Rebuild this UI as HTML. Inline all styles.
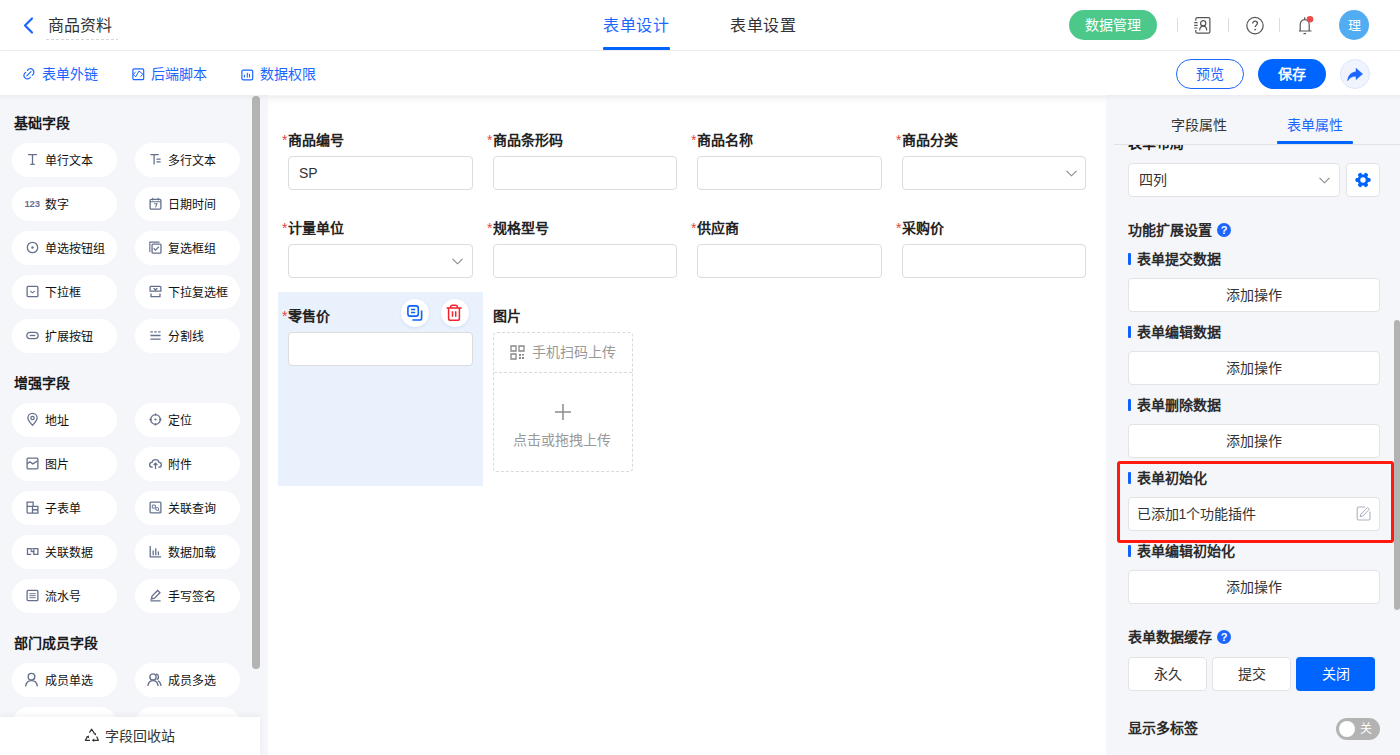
<!DOCTYPE html>
<html lang="zh-CN">
<head>
<meta charset="utf-8">
<style>
*{box-sizing:border-box;margin:0;padding:0}
html,body{width:1400px;height:755px;overflow:hidden;background:#fff}
body{position:relative;font-family:"Liberation Sans",sans-serif;font-size:14px;color:#333}
.a{position:absolute}
.in{position:absolute;left:0;top:1px;width:100%;height:100%}
.t{position:absolute;white-space:nowrap;line-height:20px}
svg{position:absolute;overflow:visible}
/* header */
#hdr{position:absolute;left:0;top:0;width:1400px;height:51px;border-bottom:1px solid #efefef;background:#fff}
#tb{position:absolute;left:0;top:51px;width:1400px;height:44px;background:#fff;box-shadow:0 2px 5px rgba(0,0,0,0.05);z-index:3}
.blue{color:#1b66ff}
/* left panel */
#lp{position:absolute;left:0;top:95px;width:268px;height:660px;background:#f5f6fa;overflow:hidden}
.h{position:absolute;white-space:nowrap;line-height:18px;font-weight:bold;color:#1a1a1a;font-size:14px}
.pill{position:absolute;width:105px;height:34px;border-radius:17px;background:#fff}
.pill .lb{position:absolute;left:33px;top:7.7px;line-height:20px;font-size:12px;color:#111;white-space:nowrap}
.pill svg{left:13.5px;top:10px}
/* canvas */
#cv{position:absolute;left:268px;top:95px;width:838px;height:660px;background:#fff;overflow:hidden}
.lab{position:absolute;white-space:nowrap;line-height:20px;font-weight:bold;color:#222;font-size:14px}
.lab i{font-style:normal;color:#f04134;font-weight:normal;margin-right:1px}
.inp{position:absolute;width:185px;height:34px;border:1px solid #dcdcdc;border-radius:4px;background:#fff}
/* right panel */
#rp{position:absolute;left:1106px;top:95px;width:294px;height:660px;background:#f5f6fa;overflow:hidden}
.btn{position:absolute;left:22px;width:252px;height:34px;border:1px solid #e3e3e6;border-radius:4px;background:#fff;text-align:center;line-height:33px;color:#333}
.sec{position:absolute;left:22px;white-space:nowrap;line-height:20px;font-weight:bold;color:#2b2b2b;padding-left:9px}
.sec:before{content:"";position:absolute;left:0;top:4px;width:3px;height:12px;background:#0f62fe;border-radius:1px}
</style>
</head>
<body>
<!-- HEADER -->
<div id="hdr">
  <svg style="left:22px;top:17px" width="12" height="17" viewBox="0 0 12 17"><path d="M10 1.5 L3 8.5 L10 15.5" fill="none" stroke="#1b66ff" stroke-width="2.2" stroke-linecap="round" stroke-linejoin="round"/></svg>
  <div class="t" style="left:48px;top:16px;font-size:16px;color:#333">商品资料</div>
  <div class="a" style="left:46px;top:39px;width:72px;height:1px;background:repeating-linear-gradient(90deg,#d6d6d6 0 3px,transparent 3px 5px)"></div>
  <div class="t" style="left:603px;top:16px;font-size:16px;color:#1b66ff;letter-spacing:0.6px">表单设计</div>
  <div class="a" style="left:603px;top:47px;width:67px;height:3px;background:#0064ff;border-radius:1px"></div>
  <div class="t" style="left:730px;top:16px;font-size:16px;color:#333;letter-spacing:0.5px">表单设置</div>

  <div class="a" style="left:1069px;top:10px;width:88px;height:30px;border-radius:15px;background:#4cc98a;color:#fff;text-align:center;line-height:30px;font-size:14px">数据管理</div>
  <div class="a" style="left:1177px;top:18px;width:1px;height:14px;background:#dcdcdc"></div>
  <div class="a" style="left:1228px;top:18px;width:1px;height:14px;background:#dcdcdc"></div>
  <div class="a" style="left:1279px;top:18px;width:1px;height:14px;background:#dcdcdc"></div>
  <!-- contact icon -->
  <svg style="left:1194px;top:17px" width="17" height="17" viewBox="0 0 17 17"><g fill="none" stroke="#555" stroke-width="1.2"><path d="M1.8 3.8V2q0-1.4 1.4-1.4h11.3q1.4 0 1.4 1.4v12.7q0 1.4-1.4 1.4H3.2q-1.4 0-1.4-1.4v-1.8"/><path d="M0.2 5.6h3.4M0.2 8.3h3.4M0.2 11h3.4"/><circle cx="9.2" cy="6.2" r="2.6"/><path d="M5.6 13.4C5.8 10.6 7.3 9.1 9.2 9.1s3.4 1.5 3.6 4.3"/></g></svg>
  <!-- help icon -->
  <svg style="left:1246px;top:17px" width="18" height="18" viewBox="0 0 18 18">
    <circle cx="9" cy="8.6" r="8.2" fill="none" stroke="#555" stroke-width="1.2"/>
    <path d="M6.6 6.6c0-1.4 1.1-2.4 2.4-2.4s2.4 0.9 2.4 2.2c0 1.6-2.3 1.9-2.3 3.6" fill="none" stroke="#555" stroke-width="1.3"/>
    <circle cx="9.1" cy="12.6" r="0.85" fill="#555"/>
  </svg>
  <!-- bell -->
  <svg style="left:1297px;top:16px" width="18" height="19" viewBox="0 0 18 19">
    <path d="M2 15h12.5M3.2 15V8.5c0-2.6 1.8-4.8 4.5-4.8s4.5 2.2 4.5 4.8V15" fill="none" stroke="#555" stroke-width="1.2"/>
    <path d="M6.5 17.6h2.5" stroke="#555" stroke-width="1.2"/>
    <path d="M7.7 1.2v2" stroke="#555" stroke-width="1.2"/>
    <circle cx="13" cy="3.2" r="3.3" fill="#ec4b4b"/>
  </svg>
  <div class="a" style="left:1339px;top:10px;width:30px;height:30px;border-radius:50%;background:#52acf2;color:#fff;text-align:center;line-height:32px;font-size:13px">理</div>
</div>

<!-- TOOLBAR -->
<div id="tb">
  <svg style="left:22px;top:15.7px" width="14" height="14" viewBox="0 0 14 14"><path d="M5.4 3.4A3.5 3.5 0 1 1 10.2 8.2M3.6 5.4A3.5 3.5 0 1 0 8.4 10.2M4.8 8.8L9 4.6" fill="none" stroke="#1b66ff" stroke-width="1.2" stroke-linecap="round"/></svg>
  <div class="t blue" style="left:42px;top:13px">表单外链</div>
  <svg style="left:132px;top:16.5px" width="13" height="13" viewBox="0 0 13 13"><rect x="0.9" y="0.9" width="10.8" height="10.8" rx="1.3" fill="none" stroke="#1b66ff" stroke-width="1.2"/><path d="M3.6 4.2L1.2 6.3l2.6 2.4L7 3l4 3.3-2.6 2.3" fill="none" stroke="#1b66ff" stroke-width="1" stroke-linejoin="round"/></svg>
  <div class="t blue" style="left:151px;top:13px">后端脚本</div>
  <svg style="left:241px;top:16.5px" width="13" height="13" viewBox="0 0 13 13"><rect x="0.9" y="2.2" width="10.8" height="9.6" rx="1.4" fill="none" stroke="#1b66ff" stroke-width="1.2"/><path d="M3.4 6.8v2.6M6.3 4.8v4.6M8.5 6v3.4" fill="none" stroke="#1b66ff" stroke-width="1.1"/></svg>
  <div class="t blue" style="left:260px;top:13px">数据权限</div>

  <div class="a" style="left:1176px;top:8px;width:68px;height:30px;border:1px solid #1b66ff;border-radius:15px;color:#1b66ff;text-align:center;line-height:28px">预览</div>
  <div class="a" style="left:1258px;top:8px;width:68px;height:30px;border-radius:15px;background:#0064ff;color:#fff;text-align:center;line-height:30px;-webkit-text-stroke:0.45px #fff">保存</div>
  <div class="a" style="left:1340px;top:8px;width:30px;height:30px;border-radius:50%;background:#eff4ff;border:1px solid #dde6fa"></div>
  <svg style="left:1347px;top:16.5px" width="16" height="13" viewBox="0 0 16 13"><path d="M9 0.3L15.6 6 9 11.6V8.3C5.6 8.2 3 9.3 0.6 12.8 1 7.6 3.8 4.4 9 3.8z" fill="#1b66ff" stroke="#1b66ff" stroke-width="0.5" stroke-linejoin="round"/></svg>
</div>

<!-- LEFT PANEL -->
<div id="lp"><div class="in">
  <div class="h" style="left:14px;top:18px">基础字段</div>
  <div class="h" style="left:14px;top:278px">增强字段</div>
  <div class="h" style="left:14px;top:538px">部门成员字段</div>
  <!--PILLS-->
  <div class="pill" style="left:12px;top:47px"><svg width="13" height="13" viewBox="0 0 14 14" fill="none" stroke="#65708c" stroke-width="1.4"><path d="M2.2 1.8h9.6M7 1.8v10.4M4.6 12.2h4.8"/></svg><span class="lb">单行文本</span></div>
  <div class="pill" style="left:135px;top:47px"><svg width="13" height="13" viewBox="0 0 14 14" fill="none" stroke="#65708c" stroke-width="1.4"><path d="M1.5 1.8h9M5.5 1.8v10.6M8 6.6h4.5M8 9.6h4.5"/></svg><span class="lb">多行文本</span></div>
  <div class="pill" style="left:12px;top:91px"><span style="position:absolute;left:12.5px;top:10px;line-height:14px;font-family:Liberation Sans;font-weight:bold;font-size:9.5px;color:#65708c;letter-spacing:-0.2px">123</span><span class="lb">数字</span></div>
  <div class="pill" style="left:135px;top:91px"><svg width="13" height="13" viewBox="0 0 14 14" fill="none" stroke="#65708c" stroke-width="1.4"><rect x="1.2" y="2.6" width="11.6" height="10.4" rx="1.2"/><path d="M4 0.8v3M10 0.8v3M1.2 5h11.6M5.6 7.2h3l-1.6 4" stroke-width="1.1"/></svg><span class="lb">日期时间</span></div>
  <div class="pill" style="left:12px;top:135px"><svg width="13" height="13" viewBox="0 0 14 14" fill="none" stroke="#65708c" stroke-width="1.4"><circle cx="7" cy="7" r="5.6"/><circle cx="7" cy="7" r="1.3" fill="#65708c" stroke="none"/></svg><span class="lb">单选按钮组</span></div>
  <div class="pill" style="left:135px;top:135px"><svg width="13" height="13" viewBox="0 0 14 14" fill="none" stroke="#65708c" stroke-width="1.4"><path d="M0.9 11.8V1.2h10.4" stroke-width="1.2"/><rect x="3.3" y="3.4" width="9.6" height="9.6" rx="1"/><path d="M5 7.8l2 2 3.6-3.6" stroke-width="1.2"/></svg><span class="lb">复选框组</span></div>
  <div class="pill" style="left:12px;top:179px"><svg width="13" height="13" viewBox="0 0 14 14" fill="none" stroke="#65708c" stroke-width="1.4"><rect x="1.2" y="1.5" width="11.6" height="11" rx="1"/><path d="M4.6 6.2L7 8.4l2.4-2.2" stroke-width="1.1"/></svg><span class="lb">下拉框</span></div>
  <div class="pill" style="left:135px;top:179px"><svg width="13" height="13" viewBox="0 0 14 14" fill="none" stroke="#65708c" stroke-width="1.4"><path d="M1.2 6.5V2.4q0-1 1-1h9.6q1 0 1 1v4.1zM5 3.4l2 1.8 2-1.8M2.2 9.2v3.3h9.6V9.2"/></svg><span class="lb">下拉复选框</span></div>
  <div class="pill" style="left:12px;top:223px"><svg width="13" height="13" viewBox="0 0 14 14" fill="none" stroke="#65708c" stroke-width="1.4"><rect x="0.9" y="3.6" width="12.2" height="6.8" rx="3.4"/><path d="M4 7h6"/></svg><span class="lb">扩展按钮</span></div>
  <div class="pill" style="left:135px;top:223px"><svg width="13" height="13" viewBox="0 0 14 14" fill="none" stroke="#65708c" stroke-width="1.4"><path d="M1.5 3h2.6M5.7 3h2.6M9.9 3h2.6M1.5 7h11M1.5 11h11"/></svg><span class="lb">分割线</span></div>
  <div class="pill" style="left:12px;top:307px"><svg width="13" height="13" viewBox="0 0 14 14" fill="none" stroke="#65708c" stroke-width="1.4"><path d="M7 13.2C3.8 10 2 7.6 2 5.4a5 5 0 0 1 10 0c0 2.2-1.8 4.6-5 7.8z"/><circle cx="7" cy="5.4" r="1.8"/></svg><span class="lb">地址</span></div>
  <div class="pill" style="left:135px;top:307px"><svg width="13" height="13" viewBox="0 0 14 14" fill="none" stroke="#65708c" stroke-width="1.4"><circle cx="7" cy="7" r="5.2"/><circle cx="7" cy="7" r="1.2" fill="#65708c" stroke="none"/><path d="M7 0.5v2.5M7 11v2.5M0.5 7h2.5M11 7h2.5"/></svg><span class="lb">定位</span></div>
  <div class="pill" style="left:12px;top:351px"><svg width="13" height="13" viewBox="0 0 14 14" fill="none" stroke="#65708c" stroke-width="1.4"><rect x="1.2" y="1.2" width="11.6" height="11.6" rx="1.2"/><path d="M1.2 7.6l3-2.4 3 2.2 5.6-3.4"/></svg><span class="lb">图片</span></div>
  <div class="pill" style="left:135px;top:351px"><svg width="13" height="13" viewBox="0 0 14 14" fill="none" stroke="#65708c" stroke-width="1.4"><path d="M4 11H3.4a2.6 2.6 0 0 1-0.2-5.2 3.9 3.9 0 0 1 7.6 0A2.6 2.6 0 0 1 10.6 11H10M7 6.8v6M5 8.6l2-2 2 2"/></svg><span class="lb">附件</span></div>
  <div class="pill" style="left:12px;top:395px"><svg width="13" height="13" viewBox="0 0 14 14" fill="none" stroke="#65708c" stroke-width="1.4"><path d="M1.2 13V1.2h6.5v4.6M1.2 5.8h11.6V13H1.2M7 5.8V13M7 9.4h5.8"/></svg><span class="lb">子表单</span></div>
  <div class="pill" style="left:135px;top:395px"><svg width="13" height="13" viewBox="0 0 14 14" fill="none" stroke="#65708c" stroke-width="1.4"><rect x="1.2" y="1.2" width="11.6" height="11.6" rx="1"/><path d="M3.6 4.4h3.2v3.2H3.6z" stroke-width="1"/><circle cx="8.8" cy="8.6" r="1.6" stroke-width="1"/><path d="M10 9.8l1.6 1.6" stroke-width="1"/></svg><span class="lb">关联查询</span></div>
  <div class="pill" style="left:12px;top:439px"><svg width="13" height="13" viewBox="0 0 14 14" fill="none" stroke="#65708c" stroke-width="1.4"><path d="M5.6 4h-4v6h4M5.8 7h2.6v3h4.4V4H8.4"/><rect x="5.6" y="4" width="2.8" height="3" stroke-width="1.1"/></svg><span class="lb">关联数据</span></div>
  <div class="pill" style="left:135px;top:439px"><svg width="13" height="13" viewBox="0 0 14 14" fill="none" stroke="#65708c" stroke-width="1.4"><path d="M1.3 1v11.8h11.7M4.5 6v5M7.3 3.5v7.5M10.1 7v4"/></svg><span class="lb">数据加载</span></div>
  <div class="pill" style="left:12px;top:483px"><svg width="13" height="13" viewBox="0 0 14 14" fill="none" stroke="#65708c" stroke-width="1.4"><rect x="1.2" y="1.5" width="11.6" height="11" rx="1"/><path d="M3.6 5h6.8M3.6 7.2h6.8M3.6 9.4h6.8" stroke-width="1"/></svg><span class="lb">流水号</span></div>
  <div class="pill" style="left:135px;top:483px"><svg width="13" height="13" viewBox="0 0 14 14" fill="none" stroke="#65708c" stroke-width="1.4"><path d="M1.5 12.8h11M2.5 10.8l1-3.4 5.8-5.8 2.5 2.5-5.8 5.8z"/></svg><span class="lb">手写签名</span></div>
  <div class="pill" style="left:12px;top:567px"><svg style="left:12px;top:9px" width="15" height="15" viewBox="0 0 14 14" fill="none" stroke="#65708c" stroke-width="1.3"><circle cx="7" cy="4.4" r="3.1"/><path d="M1.5 13.4c0.4-3.4 2.6-5.4 5.5-5.4s5.1 2 5.5 5.4"/></svg><span class="lb">成员单选</span></div>
  <div class="pill" style="left:135px;top:567px"><svg style="left:12px;top:9px" width="15" height="15" viewBox="0 0 14 14" fill="none" stroke="#65708c" stroke-width="1.3"><circle cx="5.6" cy="4.6" r="2.9"/><path d="M0.8 13c0.4-3.2 2.2-5 4.8-5s4.4 1.8 4.8 5M8.4 1.8a2.9 2.9 0 0 1 0.8 5.4M10.2 8.2c1.6 0.6 2.6 2.2 2.9 4.8"/></svg><span class="lb">成员多选</span></div>
  <div class="pill" style="left:12px;top:611px"><span class="lb"></span></div>
  <div class="pill" style="left:135px;top:611px"><span class="lb"></span></div>
<!--/PILLS-->
  <div class="a" style="left:252px;top:0;width:8px;height:573px;border-radius:4px;background:#b3b3b3"></div>
</div></div>
<div class="a" style="left:0;top:717px;width:260px;height:38px;background:#fff;box-shadow:0 -2px 6px rgba(0,0,0,0.05);z-index:2">
  <svg style="left:84px;top:10px" width="16" height="16" viewBox="0 0 16 16"><g fill="none" stroke="#333" stroke-width="1.2" stroke-linejoin="round"><path d="M5.4 5.6L7.7 2.2l2.6 4.2M12.6 9.6l1.8 3.7H9.8M6 13.3H1.4l2.1-3.9"/></g><g fill="#333"><path d="M9.2 6.8l2.6-0.9 0.3 2.6z"/><path d="M10.2 11.6v3.4l-2.4-1.7z"/><path d="M2.3 9.6l2.6-1 0.2 2.6z"/></g></svg>
  <div class="t" style="left:105px;top:9px;color:#333">字段回收站</div>
</div>

<!-- CANVAS -->
<div id="cv"><div class="in">
  <div class="a" style="left:0;top:0;width:838px;height:10px;background:linear-gradient(#f7f7f8,#fff)"></div>
  <!-- row 1 -->
  <div class="lab" style="left:14px;top:34px"><i>*</i>商品编号</div>
  <div class="inp" style="left:20px;top:60px;width:185px"></div>
  <div class="t" style="left:31px;top:67px;color:#333">SP</div>
  <div class="lab" style="left:219px;top:34px"><i>*</i>商品条形码</div>
  <div class="inp" style="left:225px;top:60px;width:184px"></div>
  <div class="lab" style="left:423px;top:34px"><i>*</i>商品名称</div>
  <div class="inp" style="left:429px;top:60px;width:185px"></div>
  <div class="lab" style="left:628px;top:34px"><i>*</i>商品分类</div>
  <div class="inp" style="left:634px;top:60px;width:184px"></div>
  <svg style="left:798px;top:74px" width="11" height="7" viewBox="0 0 11 7"><path d="M0.5 0.8l5 5 5-5" fill="none" stroke="#888" stroke-width="1.1"/></svg>
  <!-- row 2 -->
  <div class="lab" style="left:14px;top:122px"><i>*</i>计量单位</div>
  <div class="inp" style="left:20px;top:148px;width:185px"></div>
  <svg style="left:184px;top:162px" width="11" height="7" viewBox="0 0 11 7"><path d="M0.5 0.8l5 5 5-5" fill="none" stroke="#888" stroke-width="1.1"/></svg>
  <div class="lab" style="left:219px;top:122px"><i>*</i>规格型号</div>
  <div class="inp" style="left:225px;top:148px;width:184px"></div>
  <div class="lab" style="left:423px;top:122px"><i>*</i>供应商</div>
  <div class="inp" style="left:429px;top:148px;width:185px"></div>
  <div class="lab" style="left:628px;top:122px"><i>*</i>采购价</div>
  <div class="inp" style="left:634px;top:148px;width:184px"></div>
  <!-- row 3 -->
  <div class="a" style="left:10px;top:196px;width:205px;height:194px;background:#e9f1fd"></div>
  <div class="lab" style="left:14px;top:210px"><i>*</i>零售价</div>
  <div class="a" style="left:133px;top:203px;width:28px;height:28px;border-radius:50%;background:#fff;box-shadow:0 1px 3px rgba(30,80,200,0.12)"></div>
  <svg style="left:138.5px;top:208.5px" width="16" height="16" viewBox="0 0 16 16"><rect x="0.9" y="0.9" width="10.4" height="10.2" rx="2.4" fill="none" stroke="#0f62fe" stroke-width="1.6"/><path d="M4 4.6h4.2M4 7.4h4.2" stroke="#0f62fe" stroke-width="1.5"/><path d="M14.6 5.6v7.6q0 1.8-1.8 1.8H5.4" fill="none" stroke="#0f62fe" stroke-width="1.6"/></svg>
  <div class="a" style="left:173px;top:203px;width:28px;height:28px;border-radius:50%;background:#fff;box-shadow:0 1px 3px rgba(30,80,200,0.12)"></div>
  <svg style="left:178px;top:207.7px" width="16" height="17" viewBox="0 0 16 17"><g fill="none" stroke="#f5222d" stroke-width="1.5"><path d="M0.6 4h15M4.6 4V3.2q0-2 2-2h2.8q2 0 2 2V4M2.6 4.4v10q0 1.8 1.8 1.8h7.2q1.8 0 1.8-1.8v-10M6.5 7.2v5.6M9.7 7.2v5.6"/></g></svg>
  <div class="inp" style="left:20px;top:236px;width:185px"></div>
  <div class="lab" style="left:225px;top:210px">图片</div>
  <div class="a" style="left:225px;top:236px;width:140px;height:140px;border:1px dashed #d9d9d9;border-radius:4px"></div>
  <div class="a" style="left:226px;top:276px;width:138px;height:1px;background:repeating-linear-gradient(90deg,#d9d9d9 0 3px,transparent 3px 5px)"></div>
  <svg style="left:242px;top:249px" width="15" height="15" viewBox="0 0 15 15"><path d="M1 1h5v5H1zM9 1h5v5H9zM1 9h5v5H1z" fill="none" stroke="#888" stroke-width="1.3"/><path d="M9 9h2v2H9zM12 9h2v1.5h-2zM9 12h2v2H9zM12 12h2v2h-2z" fill="#888"/></svg>
  <div class="t" style="left:264px;top:246px;color:#999">手机扫码上传</div>
  <svg style="left:287px;top:308px" width="16" height="16" viewBox="0 0 16 16"><path d="M8 0v16M0 8h16" stroke="#8c8c8c" stroke-width="1.5"/></svg>
  <div class="t" style="left:245px;top:334px;color:#999">点击或拖拽上传</div>
</div></div>

<!-- RIGHT PANEL -->
<div id="rp"><div class="in">
  <div class="t" style="left:65px;top:19px;color:#333">字段属性</div>
  <div class="t" style="left:181px;top:19px;color:#1b66ff">表单属性</div>
  <div class="a" style="left:171px;top:45px;width:76px;height:3px;background:#0064ff;border-radius:1px"></div>
  <div class="a" style="left:8px;top:48px;width:286px;height:1px;background:#e2e2e4"></div>
  <div class="a" style="left:0;top:49px;width:294px;height:610px;overflow:hidden">
    <div class="h" style="left:22px;top:-11px">表单布局</div>
    <div class="a" style="left:22px;top:18px;width:212px;height:34px;border:1px solid #e3e3e6;border-radius:4px;background:#fff"></div>
    <div class="t" style="left:33px;top:25px;color:#333">四列</div>
    <svg style="left:213px;top:32px" width="11" height="7" viewBox="0 0 11 7"><path d="M0.5 0.8l5 5 5-5" fill="none" stroke="#888" stroke-width="1.1"/></svg>
    <div class="a" style="left:240px;top:18px;width:34px;height:34px;border:1px solid #e3e3e6;border-radius:4px;background:#fff"></div>
    <svg style="left:249px;top:26.5px" width="16" height="16" viewBox="-8 -8 16 16"><g fill="#0064ff"><rect x="-2" y="-7.6" width="4" height="4.2" rx="1.4" transform="rotate(30)"/><rect x="-2" y="-7.6" width="4" height="4.2" rx="1.4" transform="rotate(90)"/><rect x="-2" y="-7.6" width="4" height="4.2" rx="1.4" transform="rotate(150)"/><rect x="-2" y="-7.6" width="4" height="4.2" rx="1.4" transform="rotate(210)"/><rect x="-2" y="-7.6" width="4" height="4.2" rx="1.4" transform="rotate(270)"/><rect x="-2" y="-7.6" width="4" height="4.2" rx="1.4" transform="rotate(330)"/><circle r="5.5"/></g><circle r="2.7" fill="#fff"/></svg>
    <div class="h" style="left:22px;top:76px;color:#2a2a2a">功能扩展设置</div>
    <div class="a" style="left:111px;top:78px;width:14px;height:14px;border-radius:50%;background:#1b66ff;color:#fff;font-size:11px;font-weight:bold;line-height:14px;text-align:center">?</div>
    <div class="sec h" style="top:104px">表单提交数据</div>
    <div class="btn" style="top:133px">添加操作</div>
    <div class="sec h" style="top:177px">表单编辑数据</div>
    <div class="btn" style="top:206px">添加操作</div>
    <div class="sec h" style="top:250px">表单删除数据</div>
    <div class="btn" style="top:279px">添加操作</div>
    <div class="sec h" style="top:323px">表单初始化</div>
    <div class="btn" style="top:352px;text-align:left;padding-left:7.5px">已添加1个功能插件</div>
    <svg style="left:250px;top:361px" width="15" height="15" viewBox="0 0 15 15"><path d="M9 1H2.6Q1.2 1 1.2 2.4v10.2q0 1.4 1.4 1.4h10q1.4 0 1.4-1.4V5.6" fill="none" stroke="#adb2c4" stroke-width="1.1"/><path d="M4.2 10.6l0.6-2.3 6.8-6.8 1.8 1.8-6.8 6.8z" fill="none" stroke="#a3a8bb" stroke-width="1"/></svg>
    <div class="sec h" style="top:396px">表单编辑初始化</div>
    <div class="btn" style="top:425px">添加操作</div>
    <div class="h" style="left:22px;top:483px;color:#2a2a2a">表单数据缓存</div>
    <div class="a" style="left:111px;top:485px;width:14px;height:14px;border-radius:50%;background:#1b66ff;color:#fff;font-size:11px;font-weight:bold;line-height:14px;text-align:center">?</div>
    <div class="btn" style="top:512px;left:22px;width:79px;height:34px;line-height:32px">永久</div>
    <div class="btn" style="top:512px;left:106px;width:79px;height:34px;line-height:32px">提交</div>
    <div class="btn" style="top:512px;left:190px;width:79px;height:34px;line-height:34px;background:#0064ff;border:0;color:#fff">关闭</div>
    <div class="h" style="left:22px;top:574px;color:#2a2a2a">显示多标签</div>
    <div class="a" style="left:230px;top:573px;width:44px;height:22px;border-radius:11px;background:#b3b3b3"></div>
    <div class="a" style="left:233px;top:576px;width:16px;height:16px;border-radius:50%;background:#fff"></div>
    <div class="t" style="left:254px;top:573.5px;color:#fff;font-size:12px">关</div>
  </div>
  <div class="a" style="left:288px;top:224px;width:6px;height:290px;border-radius:3px;background:#b3b3b3"></div>
  <div class="a" style="left:11px;top:365px;width:277px;height:82px;border:3px solid #ff1a10;border-radius:3px"></div>
</div></div>
</body>
</html>
